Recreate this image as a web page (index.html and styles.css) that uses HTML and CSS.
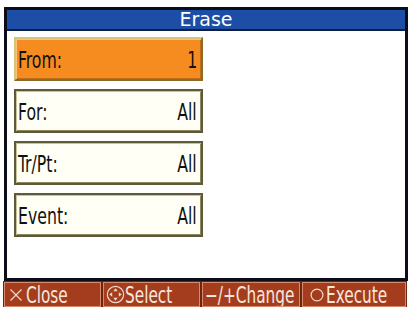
FILE: index.html
```html
<!DOCTYPE html>
<html lang="en">
<head>
    <meta charset="UTF-8">
    <title>Erase</title>
    <link rel="stylesheet" href="styles.css">
</head>
<body>
    <div class="screen">
        <div class="frame">
            <div class="title">Erase</div>
            <div class="list">
                <div class="field active"><span class="lbl">From:</span><span class="val">1</span></div>
                <div class="field"><span class="lbl">For:</span><span class="val">All</span></div>
                <div class="field"><span class="lbl">Tr/Pt:</span><span class="val">All</span></div>
                <div class="field"><span class="lbl">Event:</span><span class="val">All</span></div>
            </div>
        </div>
        <div class="bar">
            <div class="btn b-close">
                <svg class="ico" width="14" height="14" viewBox="0 0 14 14">
                    <path d="M1.5 1.5 L12.5 12.5 M12.5 1.5 L1.5 12.5" stroke="#f3d9cc" stroke-width="1.2"/>
                </svg><span class="txt">Close</span></div>
            <div class="btn b-select">
                <svg class="dpad" width="19" height="19" viewBox="0 0 20 20">
                    <circle cx="10" cy="10" r="8.6" fill="none" stroke="#f3d9cc" stroke-width="1.2"/>
                    <polygon points="10,3.5 12.3,6.5 7.7,6.5" fill="#f3d9cc"/>
                    <polygon points="10,16.5 12.3,13.5 7.7,13.5" fill="#f3d9cc"/>
                    <polygon points="3.5,10 6.5,7.7 6.5,12.3" fill="#f3d9cc"/>
                    <polygon points="16.5,10 13.5,7.7 13.5,12.3" fill="#f3d9cc"/>
                </svg><span class="txt">Select</span></div>
            <div class="btn b-change"><span class="txt">&minus;/+Change</span></div>
            <div class="btn b-exec">
                <svg class="ring" width="14" height="14" viewBox="0 0 14 14">
                    <circle cx="7" cy="7" r="5.9" fill="none" stroke="#f3d9cc" stroke-width="1.2"/>
                </svg><span class="txt">Execute</span></div>
        </div>
    </div>
</body>
</html>
```

FILE: styles.css
```css
body {
    margin: 0;
    background: #ffffff;
    font-family: "DejaVu Sans Condensed", "DejaVu Sans", sans-serif;
}
.screen {
    width: 404px;
    margin: 7px 0 0 4px;
}
.frame {
    border: 3px solid #0d0d1a;
    background: #ffffff;
    height: 268px;
}
.title {
    height: 19px;
    background: #1d4ea6;
    border-bottom: 2px solid #0f1f44;
    color: #ffffff;
    font-family: "DejaVu Sans", sans-serif;
    font-size: 19px;
    line-height: 19px;
    text-align: center;
}
.list {
    padding: 6px 0 0 7px;
    display: flex;
    flex-direction: column;
    gap: 8px;
}
.field {
    width: 189px;
    height: 44px;
    box-sizing: border-box;
    display: flex;
    justify-content: space-between;
    align-items: center;
    padding: 1px 4px 0 2px;
    background: #fffff6;
    border: 2px solid #5d5a38;
    box-shadow: inset 1px 1px 0 #c9c49a, inset -1px -1px 0 #8a8660;
    color: #111111;
    font-size: 23px;
}
.lbl {
    display: inline-block;
    transform: scaleX(0.76);
    transform-origin: left center;
}
.val {
    display: inline-block;
    transform: scaleX(0.76);
    transform-origin: right center;
}
.field.active {
    background: #f68b1f;
    border-color: #d8c27a #8c6a2a #8c6a2a #d8c27a;
    box-shadow: inset 1px 1px 0 #f9c47a, inset -1px -1px 0 #c0701a;
}
.bar {
    display: flex;
    gap: 2px;
    margin-top: 1px;
    height: 25px;
}
.btn {
    box-sizing: border-box;
    height: 25px;
    background: #a43d1e;
    border: 1px solid #d78a6c;
    outline: 1px solid #6b2410;
    color: #f6e6de;
    font-size: 23px;
    display: flex;
    align-items: center;
    padding-left: 2px;
    white-space: nowrap;
    overflow: hidden;
}
.btn svg {
    flex-shrink: 0;
}
.txt {
    display: inline-block;
    transform: scaleX(0.74);
    transform-origin: left center;
}
.b-close { width: 97px; }
.b-select { width: 97px; }
.b-change { width: 98px; }
.b-exec { width: 104px; }
.ico { margin: 0 3px 0 2px; }
.dpad { margin-right: 0; }
.ring { margin: 0 2px 0 5px; }
```
